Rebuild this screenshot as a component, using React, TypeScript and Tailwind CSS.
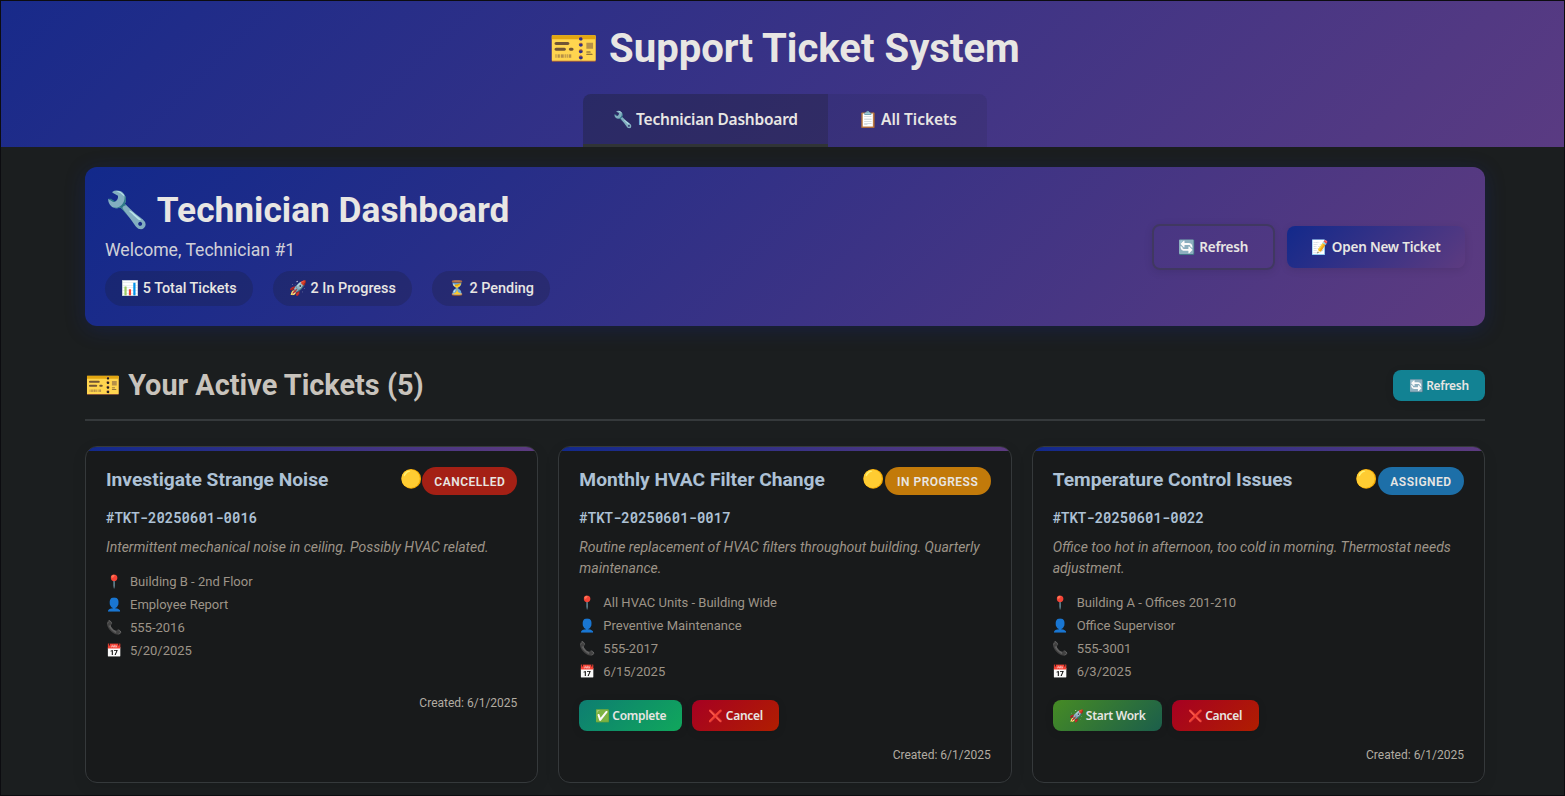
type Action = { label: string; icon: string; className: string };

type Ticket = {
  title: string;
  status: string;
  statusClass: string;
  code: string;
  description: string;
  details: [string, string][];
  actions: Action[];
};

const cancel: Action = {
  icon: "❌",
  label: "Cancel",
  className: "w-[87px] bg-linear-135/srgb from-[#a60022] to-[#b01e00]",
};

const tickets: Ticket[] = [
  {
    title: "Investigate Strange Noise",
    status: "Cancelled",
    statusClass: "w-[95px] bg-[#a42015]",
    code: "#TKT-20250601-0016",
    description: "Intermittent mechanical noise in ceiling. Possibly HVAC related.",
    details: [
      ["📍", "Building B - 2nd Floor"],
      ["👤", "Employee Report"],
      ["📞", "555-2016"],
      ["📅", "5/20/2025"],
    ],
    actions: [],
  },
  {
    title: "Monthly HVAC Filter Change",
    status: "In Progress",
    statusClass: "w-[106px] bg-[#c27a0a]",
    code: "#TKT-20250601-0017",
    description: "Routine replacement of HVAC filters throughout building. Quarterly maintenance.",
    details: [
      ["📍", "All HVAC Units - Building Wide"],
      ["👤", "Preventive Maintenance"],
      ["📞", "555-2017"],
      ["📅", "6/15/2025"],
    ],
    actions: [
      { icon: "✅", label: "Complete", className: "w-[103px] bg-linear-135/srgb from-[#0e7d71] to-[#10a75c]" },
      cancel,
    ],
  },
  {
    title: "Temperature Control Issues",
    status: "Assigned",
    statusClass: "w-[86px] bg-[#1d6fa8]",
    code: "#TKT-20250601-0022",
    description: "Office too hot in afternoon, too cold in morning. Thermostat needs adjustment.",
    details: [
      ["📍", "Building A - Offices 201-210"],
      ["👤", "Office Supervisor"],
      ["📞", "555-3001"],
      ["📅", "6/3/2025"],
    ],
    actions: [
      { icon: "🚀", label: "Start Work", className: "w-[109px] bg-linear-135/srgb from-[#468b24] to-[#1b5e4b]" },
      cancel,
    ],
  },
];

const buttonFont = "font-['Noto_Sans','Noto_Color_Emoji',sans-serif] font-semibold text-[#e8e6e3] whitespace-nowrap";

function SmallButton({ icon, label, className }: Action) {
  return (
    <button
      className={`flex h-[31px] items-center justify-center gap-0.5 rounded-lg text-[12px] leading-[15px] shadow-[0_2px_8px_rgba(0,0,0,0.1)] ${buttonFont} ${className}`}
    >
      <span>{icon}</span>
      <span className="tracking-[-0.3px]">{label}</span>
    </button>
  );
}

function Pill({ children, className }: { children: string; className: string }) {
  return (
    <span
      className={`flex h-[35px] items-center justify-center rounded-[20px] bg-[#181a1b]/20 pt-px text-[14.4px] font-medium whitespace-pre ${className}`}
    >
      {children}
    </span>
  );
}

function TicketCard({ ticket }: { ticket: Ticket }) {
  return (
    <article className="flex h-[337px] flex-col overflow-hidden rounded-xl border border-[#35393b] bg-[#181a1b] shadow-[0_4px_15px_rgba(0,0,0,0.08)]">
      <div className="h-1 shrink-0 bg-linear-to-r/srgb from-[#12298b] to-[#5d3b80]" />
      <div className="flex flex-col px-5 pt-4">
        <div className="flex items-start">
          <h3 className="flex-1 text-[19.2px] leading-[25px] font-bold text-[#adc1d5]">{ticket.title}</h3>
          <span className="text-[18px] leading-[24px]">🟡</span>
          <span
            className={`flex h-7 items-center justify-center rounded-[20px] pt-px text-[12px] font-semibold tracking-[0.5px] text-[#e8e6e3] uppercase ${ticket.statusClass}`}
          >
            {ticket.status}
          </span>
        </div>
        <div className="mt-[15px] font-['Roboto_Mono','Liberation_Mono',monospace] text-[14px] leading-4 font-semibold text-[#adc1d5]">
          {ticket.code}
        </div>
        <p className="mt-[11px] text-[14px] leading-[21px] text-[#9d9488] italic">{ticket.description}</p>
        <ul className="mt-4 flex flex-col gap-2 text-[13px] leading-[15px] text-[#9d9488]">
          {ticket.details.map(([icon, text]) => (
            <li key={icon} className="flex gap-2">
              <span className="w-4 text-center">{icon}</span>
              <span>{text}</span>
            </li>
          ))}
        </ul>
        <div className={ticket.actions.length ? "mt-[21px] flex gap-[10px]" : "mt-[21px] h-0"}>
          {ticket.actions.map((a) => (
            <SmallButton key={a.label} {...a} />
          ))}
        </div>
        <div className="mt-[17px] text-right text-[12px] leading-[14px] text-[#b2aca2]">Created: 6/1/2025</div>
      </div>
    </article>
  );
}

export default function App() {
  return (
    <div className="h-[796px] w-full overflow-hidden border border-[#0c0c10] bg-[#1b1e1f] font-['Roboto','Noto_Color_Emoji',sans-serif] text-[#e8e6e3]">
      <header className="flex h-[146px] flex-col items-center bg-linear-135/srgb from-[#182a8a] to-[#5a3b82] pl-1">
        <h1 className="mt-6 h-12 text-[40.1px] leading-[48px] font-bold whitespace-pre">🎫 Support Ticket System</h1>
        <nav className={`mt-[21px] ml-px flex h-[53px] overflow-hidden rounded-t-lg text-[16px] ${buttonFont}`}>
          <a className="flex w-[245px] items-center justify-center gap-[3px] border-b-[3px] border-[#303436] bg-[#181a1b]/30">
            <span>🔧</span>
            <span className="pt-0.5 text-[15.5px] tracking-[-0.23px]">Technician Dashboard</span>
          </a>
          <a className="flex w-[159px] items-center justify-center gap-[3px] bg-[#181a1b]/10 pb-[3px]">
            <span>📋</span>
            <span className="pt-0.5 text-[15.5px] tracking-[-0.05px]">All Tickets</span>
          </a>
        </nav>
      </header>

      <main className="ml-[84px] w-[1400px] pt-5">
        <section className="flex h-[159px] items-center justify-between rounded-xl bg-linear-135/srgb from-[#12298b] to-[#5d3b80] px-5 shadow-[0_4px_20px_rgba(19,41,139,0.3)]">
          <div>
            <h2 className="pt-0.5 text-[35.3px] leading-[42px] font-bold whitespace-pre">🔧 Technician Dashboard</h2>
            <p className="mt-[9px] text-[17.6px] leading-[21px] text-[#e8e6e3]/90">Welcome, Technician #1</p>
            <div className="mt-[10px] flex gap-5">
              <Pill className="w-[148px]">📊 5 Total Tickets</Pill>
              <Pill className="w-[139px]">🚀 2 In Progress</Pill>
              <Pill className="w-[118px]">⏳ 2 Pending</Pill>
            </div>
          </div>
          <div className={`flex items-center gap-3 text-[14px] ${buttonFont}`}>
            <button className="flex h-[46px] w-[123px] items-center justify-center gap-[3px] rounded-lg border-2 border-[#403861] shadow-[0_2px_8px_rgba(0,0,0,0.1)]">
              <span>🔄</span>
              <span className="pt-0.5 text-[13.5px] tracking-[-0.2px]">Refresh</span>
            </button>
            <button className="flex h-[42px] w-[178px] items-center justify-center gap-[3px] rounded-lg bg-linear-135/srgb from-[#12298b] to-[#5d3b80] shadow-[0_2px_8px_rgba(0,0,0,0.1)]">
              <span>📝</span>
              <span className="pt-0.5 text-[13.5px] tracking-[-0.2px]">Open New Ticket</span>
            </button>
          </div>
        </section>

        <section className="mt-[30px]">
          <div className="flex h-[65px] items-center justify-between border-b-2 border-[#35393b] pb-1">
            <h2 className="-mt-0.5 text-[28.9px] leading-[34px] font-bold whitespace-pre text-[#c8c3bc]">🎫 Your Active Tickets (5)</h2>
            <SmallButton icon="🔄" label="Refresh" className="w-[92px] bg-[#128293]" />
          </div>
          <div className="mt-[25px] grid grid-cols-3 gap-5">
            {tickets.map((t) => (
              <TicketCard key={t.code} ticket={t} />
            ))}
          </div>
        </section>
      </main>
    </div>
  );
}
